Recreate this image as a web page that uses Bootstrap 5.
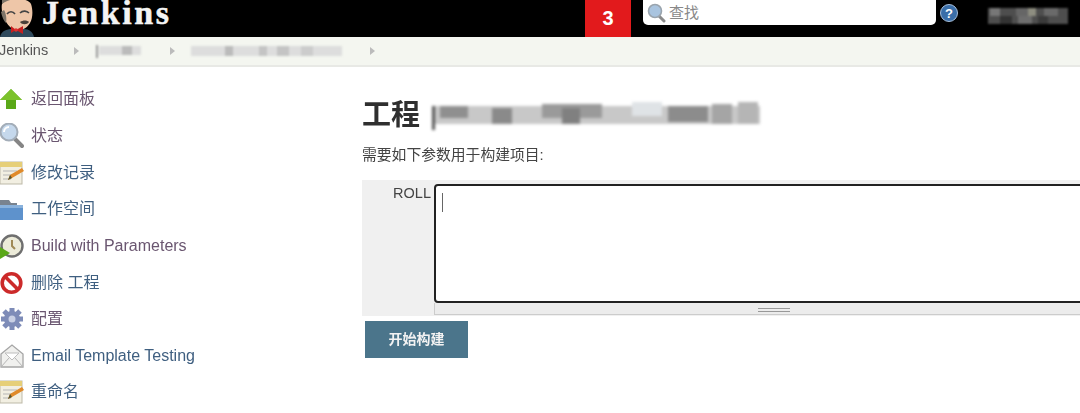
<!DOCTYPE html>
<html lang="zh">
<head>
    <meta charset="UTF-8">
    <title>Jenkins</title>
    <link href="https://cdn.jsdelivr.net/npm/bootstrap@5.3.0/dist/css/bootstrap.min.css" rel="stylesheet">
    <style>
        html, body { height: 413px; overflow: hidden; }
        body { font-family: "Liberation Sans", "Noto Sans CJK SC", sans-serif; color: #333; background: #fff; filter: blur(.5px); }
        .top-head { height: 37px; background: #000; overflow: hidden; }
        .logo-wrap { width: 585px; }
        .logo-name { font-family: "Liberation Serif", serif; font-weight: 700; font-size: 34px; line-height: 26px; padding-top: 0; color: #f4f4f4; letter-spacing: 2.6px; margin-left: 4px; -webkit-text-stroke: .5px #f4f4f4; }
        .alert-count { width: 46px; height: 37px; background: #e21a1c; color: #fff; font-weight: 700; font-size: 20px; line-height: 37px; text-align: center; }
        .search-box { width: 293px; height: 25px; margin-left: 12px; background: #fff; border-radius: 0 0 5px 5px; padding-left: 4px; color: #888; font-size: 15px; line-height: 24px; gap: 3px; }
        .help-dot { margin-left: 4px; margin-top: 4px; }
        .user-blur { margin-left: 30px; margin-top: 8px; filter: blur(1px); }
        .crumb-bar { height: 30px; background: #f4f6f0; border-bottom: 2px solid #e8e9e5; font-size: 14.5px; color: #555; }
        .crumb-sep { width: 0; height: 0; border-left: 5px solid #bbb; border-top: 4px solid transparent; border-bottom: 4px solid transparent; }
        .crumb-first { margin-left: -1px; width: 75px; }
        .blur-strip { filter: blur(1px); display: block; }
        .blur-title { filter: blur(1.6px); display: block; }
        .side-col { width: 362px; flex: none; padding-top: 14px; }
        .side-row { height: 36.65px; font-size: 16px; text-decoration: none; gap: 7px; }
        .side-row svg { flex: none; }
        .tint-plum { color: #6a5670; }
        .tint-blue { color: #3f5f80; }
        .main-col { min-width: 0; flex: 1; overflow: hidden; padding-top: 29px; }
        .job-title { font-size: 29px; font-weight: 700; line-height: 38px; color: #2f2f2f; margin: 0; gap: 12px; }
        .job-note { font-size: 14.8px; line-height: 20px; margin: 11px 0 15px; color: #444; }
        .param-block { height: 136px; background: #f0f0f0; width: 760px; }
        .param-name { width: 72px; flex: none; text-align: right; font-size: 14.5px; color: #444; padding: 3px 3px 0 0; }
        .param-field { width: 720px; flex: none; padding-top: 4px; }
        .param-input { height: 119px; width: 100%; background: #fff; border: 2px solid #222; border-radius: 4px; padding: 7px 6px; }
        .caret-mark { display: block; width: 1px; height: 19px; background: #666; }
        .grip-bar { height: 12px; border-bottom: 1px solid #ccc; border-left: 1px solid #ccc; background: #ececec; padding-top: 5px; padding-left: 323px; }
        .grip-mark { display: block; width: 32px; height: 4px; border-top: 1px solid #999; border-bottom: 1px solid #999; }
        .build-btn { width: 103px; height: 37px; margin: 5px 0 0 3px; border: 0; border-radius: 0; background: #4b758b; color: #f2f2f2; font-size: 14px; font-weight: 700; padding: 0; }
        .build-btn:hover { background: #4b758b; color: #f2f2f2; }
    </style>
</head>
<body>
    <div class="top-head d-flex">
        <div class="logo-wrap d-flex">
            <svg width="38" height="37" viewBox="0 0 38 37">
                <path d="M0 37c1-6 7-8 12-8h12c5 0 9 3 10 8z" fill="#2f4a5c"/>
                <path d="M2 4C5-3 28-3 31 4c2 6 2 14-1 19-3 5-8 8-14 7C8 29 0 14 2 4z" fill="#eec6a8"/>
                <path d="M2 4c2-2 5-3 8-4H2zM1 12c1 5 3 9 5 11 1-4 0-10-2-13z" fill="#7d7468"/>
                <path d="M7 14c2-3 6-3 8 0M20 13c3-3 7-2 9 0" stroke="#444" stroke-width="1.6" fill="none"/>
                <path d="M20 22c3-2 7-2 9 0-2 3-7 3-9 0z" fill="#4a4038"/>
                <path d="M16 30l-5-4v7zM16 30l7-4v8z" fill="#c8201f"/>
                <circle cx="16" cy="30" r="1.8" fill="#e03030"/>
            </svg>
            <div class="logo-name">Jenkins</div>
        </div>
        <div class="alert-count">3</div>
        <div class="search-box d-flex align-items-center">
            <svg width="19" height="20" viewBox="0 0 19 20"><line x1="11" y1="12" x2="17" y2="18" stroke="#8a8a8a" stroke-width="3" stroke-linecap="round"/><circle cx="8" cy="8" r="6.5" fill="#a9c4df" stroke="#9aa4ad" stroke-width="1.6"/></svg>
            <span>查找</span>
        </div>
        <svg class="help-dot" width="18" height="18" viewBox="0 0 18 18"><circle cx="9" cy="9" r="8.5" fill="#3a6ea8" stroke="#a8c0dc"/><text x="9" y="13.5" text-anchor="middle" font-family="Liberation Sans" font-weight="700" font-size="13" fill="#fff">?</text></svg>
        <svg class="user-blur" width="80" height="16" viewBox="0 0 80 16">
            <rect width="80" height="16" fill="#4e4e4e"/><rect x="2" width="10" height="8" fill="#777"/><rect x="12" y="8" width="12" height="8" fill="#333"/><rect x="28" y="0" width="14" height="8" fill="#666"/><rect x="40" y="0" width="8" height="8" fill="#8d8d80"/><rect x="30" y="8" width="14" height="8" fill="#6e6e6e"/><rect x="56" width="14" height="8" fill="#6a6a6a"/><rect x="50" y="8" width="10" height="8" fill="#3a3a3a"/>
        </svg>
    </div>

    <div class="crumb-bar d-flex align-items-center">
        <span class="crumb-first">Jenkins</span>
        <i class="crumb-sep"></i>
        <svg class="blur-strip" style="margin-left:17px" width="46" height="14" viewBox="0 0 46 14"><rect y="1" width="2" height="13" fill="#999"/><rect x="3" y="2" width="42" height="9" fill="#ddd"/><rect x="26" y="2" width="10" height="9" fill="#bbb"/></svg>
        <i class="crumb-sep" style="margin-left:28px"></i>
        <svg class="blur-strip" style="margin-left:16px" width="152" height="12" viewBox="0 0 152 12"><rect y="1" width="151" height="10" fill="#ddd"/><rect x="34" y="1" width="8" height="10" fill="#bbb"/><rect x="68" y="1" width="8" height="10" fill="#c4c4c4"/><rect x="86" y="1" width="12" height="10" fill="#c4c4c4"/><rect x="110" y="1" width="12" height="10" fill="#ccc"/></svg>
        <i class="crumb-sep" style="margin-left:27px"></i>
    </div>

    <div class="d-flex">
        <nav class="side-col d-flex flex-column">
            <a class="side-row d-flex align-items-center tint-plum" href="#">
                <svg width="24" height="24" viewBox="0 0 24 24"><path d="M11 2L22 13h-6v9H6v-9H0z" fill="#5aa818"/><path d="M11 2L22 13H0z" fill="#7cc22c"/></svg>返回面板</a>
            <a class="side-row d-flex align-items-center tint-plum" href="#">
                <svg width="24" height="26" viewBox="0 0 24 26"><line x1="14" y1="15" x2="22" y2="23" stroke="#858585" stroke-width="4" stroke-linecap="round"/><circle cx="9" cy="9" r="8.5" fill="#c5d8ec" stroke="#a3adb8" stroke-width="2"/><path d="M4 9a5 5 0 0 1 5-5" stroke="#fff" stroke-width="2" fill="none"/></svg>状态</a>
            <a class="side-row d-flex align-items-center tint-blue" href="#">
                <svg width="24" height="26" viewBox="0 0 24 26"><rect x="0" y="2" width="22" height="22" fill="#f2efe2" stroke="#bdb9a8"/><rect x="0" y="2" width="22" height="5" fill="#e6cf78"/><path d="M3 11h14M3 15h10M3 19h8" stroke="#b5b5b5"/><path d="M8 20l2-5L22 8l2 3-12 7z" fill="#e08a2a"/><path d="M8 20l2-5 2 3z" fill="#553"/></svg>修改记录</a>
            <a class="side-row d-flex align-items-center tint-blue" href="#">
                <svg width="24" height="24" viewBox="0 0 24 24"><path d="M0 3h9l2 3h6v4H0z" fill="#79838f"/><path d="M0 8h23v15H0z" fill="#5e92cc"/><path d="M0 8h23v3H0z" fill="#8ab2dc"/></svg>工作空间</a>
            <a class="side-row d-flex align-items-center tint-plum" href="#">
                <svg width="24" height="26" viewBox="0 0 24 26"><circle cx="12" cy="13" r="10.5" fill="#ecebd9" stroke="#6f6f6f" stroke-width="2.4"/><path d="M12 7v6l3 3" stroke="#a08a55" stroke-width="2" fill="none"/><path d="M0 14l10 6-10 6z" fill="#5aa818"/></svg>Build with Parameters</a>
            <a class="side-row d-flex align-items-center tint-blue" href="#">
                <svg width="24" height="24" viewBox="0 0 24 24"><circle cx="11.500" cy="12" r="9.300" fill="#fff" stroke="#cc2a2a" stroke-width="3.600"/><path d="M5 5.500l13 13" stroke="#cc2a2a" stroke-width="3.600"/></svg>删除 工程</a>
            <a class="side-row d-flex align-items-center tint-plum" href="#">
                <svg width="24" height="26" viewBox="0 0 24 26"><g stroke="#7e8cb8" stroke-width="5"><path d="M12 2v22M1 13h22M4 5l16 16M20 5L4 21"/></g><circle cx="12" cy="13" r="8" fill="#7e8cb8"/><circle cx="12" cy="13" r="3.500" fill="#c9d0e4"/></svg>配置</a>
            <a class="side-row d-flex align-items-center tint-blue" href="#">
                <svg width="24" height="26" viewBox="0 0 24 26"><path d="M1 11L12 2l11 9v13H1z" fill="#f0f0ee" stroke="#a5a5a5" stroke-width="1.300"/><path d="M5 10h14l-7 7z" fill="#fff" stroke="#bdbdbd"/><path d="M1 24l8-9M23 24l-8-9" stroke="#b5b5b5"/></svg>Email Template Testing</a>
            <a class="side-row d-flex align-items-center tint-blue" href="#">
                <svg width="24" height="26" viewBox="0 0 24 26"><rect x="0" y="2" width="22" height="22" fill="#f2efe2" stroke="#bdb9a8"/><rect x="0" y="2" width="22" height="5" fill="#e6cf78"/><path d="M3 11h14M3 15h10M3 19h8" stroke="#b5b5b5"/><path d="M8 20l2-5L22 8l2 3-12 7z" fill="#e08a2a"/><path d="M8 20l2-5 2 3z" fill="#553"/></svg>重命名</a>
        </nav>

        <main class="main-col">
            <h1 class="job-title d-flex align-items-center">工程
                <svg class="blur-title" width="328" height="30" viewBox="0 0 328 30"><rect y="6" width="328" height="18" fill="#c8c8c8"/><rect y="6" width="3" height="24" fill="#555"/><rect x="8" y="6" width="28" height="12" fill="#8f8f8f"/><rect x="60" y="8" width="20" height="16" fill="#8a8a8a"/><rect x="110" y="4" width="60" height="14" fill="#9a9a9a"/><rect x="130" y="8" width="18" height="16" fill="#808080"/><rect x="200" y="2" width="30" height="14" fill="#dfe3e6"/><rect x="236" y="6" width="40" height="16" fill="#8c8c8c"/><rect x="280" y="4" width="20" height="20" fill="#a5a5a5"/><rect x="306" y="2" width="20" height="22" fill="#b5b5b5"/></svg>
            </h1>
            <p class="job-note">需要如下参数用于构建项目:</p>
            <div class="param-block d-flex">
                <div class="param-name">ROLL</div>
                <div class="param-field">
                    <div class="param-input"><span class="caret-mark"></span></div>
                    <div class="grip-bar"><span class="grip-mark"></span></div>
                </div>
            </div>
            <button type="button" class="btn build-btn">开始构建</button>
        </main>
    </div>

    <script src="https://cdn.jsdelivr.net/npm/bootstrap@5.3.0/dist/js/bootstrap.bundle.min.js"></script>
</body>
</html>
